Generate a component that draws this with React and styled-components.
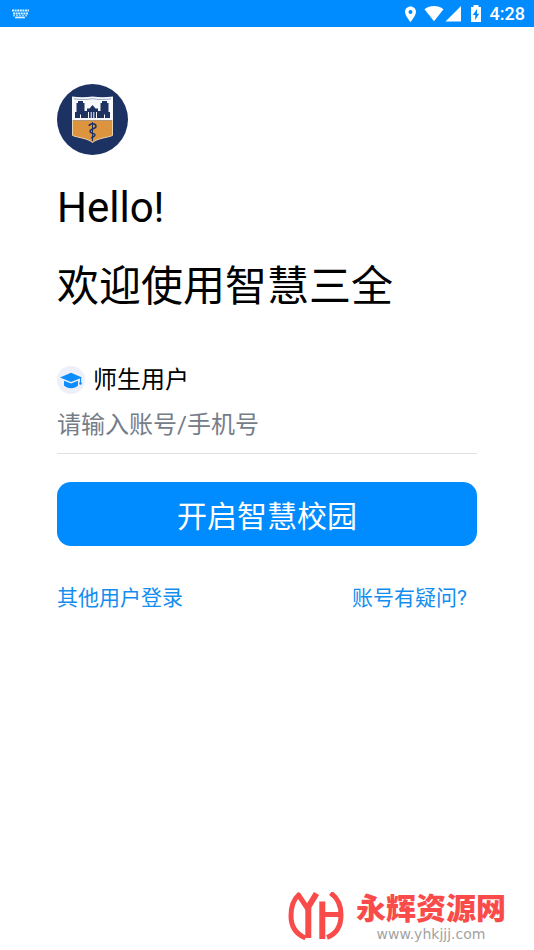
import React, {useState} from 'react';
import styled, {createGlobalStyle} from 'styled-components';


const GlobalStyle = createGlobalStyle`
    * {
        box-sizing: border-box;
    }
    body {
        margin: 0;
        background: #ffffff;
        color: #000000;
        font-family: Roboto, "Noto Sans CJK SC", sans-serif;
    }
`;

const Page = styled.div`
    display: flex;
    flex-direction: column;
    min-height: 100vh;
`;

const StatusBar = styled.header`
    display: flex;
    align-items: center;
    justify-content: space-between;
    height: 27px;
    padding: 0 9px 0 12px;
    background: #008cff;
    color: #ffffff;
`;

const StatusIcons = styled.div`
    display: flex;
    align-items: center;
`;

const Clock = styled.time`
    margin-left: 8px;
    font-size: 18px;
    line-height: 27px;
    font-weight: 500;
`;

const Content = styled.main`
    flex: 1;
    padding: 57px 57px 0;
`;

const Logo = styled.svg`
    display: block;
    width: 71px;
    height: 71px;
`;

const Title = styled.h1`
    margin: 13px 0 0;
    font-size: 42px;
    line-height: 79px;
    font-weight: 400;
`;

const UserType = styled.label`
    display: flex;
    align-items: center;
    gap: 8px;
    margin-top: 36px;
    font-size: 24px;
    line-height: 36px;
`;

const AccountInput = styled.input`
    display: block;
    width: 100%;
    height: 56px;
    padding: 0 0 2px;
    border: 0;
    border-bottom: 1px solid #e0e0e0;
    outline: none;
    background: transparent;
    font: inherit;
    font-size: 24px;

    &::placeholder {
        color: #757d88;
        opacity: 1;
    }
`;

const SubmitButton = styled.button`
    display: block;
    width: 100%;
    height: 64px;
    margin-top: 28px;
    padding: 0;
    border: 0;
    border-radius: 14px;
    background: #008cff;
    color: #ffffff;
    font: inherit;
    font-size: 30px;
    cursor: pointer;
`;

const LinkRow = styled.nav`
    display: flex;
    justify-content: space-between;
    margin-top: 36px;
    padding-right: 10px;
`;

const TextLink = styled.a`
    color: #148df0;
    font-size: 21px;
    line-height: 32px;
    text-decoration: none;
`;

const SiteMark = styled.footer`
    display: flex;
    align-items: flex-end;
    justify-content: flex-end;
    gap: 12px;
    padding: 0 28px 8px 0;
`;

const SiteText = styled.div`
    display: flex;
    flex-direction: column;
    align-items: center;
`;

const SiteName = styled.strong`
    color: #fa4b4b;
    font-family: "Liberation Sans", "Noto Sans CJK SC", sans-serif;
    font-size: 30px;
    line-height: 34px;
    font-weight: 900;
`;

const SiteUrl = styled.span`
    color: #a2a2a2;
    font-family: "DejaVu Sans", sans-serif;
    font-size: 14px;
    line-height: 16px;
`;


const KeyboardIcon = () => (
    <svg width="17" height="10" viewBox="0 0 17 10" fill="none" stroke="#d5f2ff" aria-hidden="true">
        <path d="M0 1.5H17M1 4.5H16" strokeWidth="2" strokeDasharray="2 .6"/>
        <path d="M1 6.8H16" strokeWidth="1" strokeDasharray="2 1"/>
        <path d="M3 8.5H13" strokeWidth="1.6"/>
    </svg>
);

const SignalIcons = () => (
    <svg width="78" height="18" viewBox="0 0 78 18" fill="#ffffff" aria-hidden="true">
        {/* location */}
        <path fillRule="evenodd" d="M6.5 1.5C3.4 1.5 1 3.8 1 6.8C1 10.8 6.5 17 6.5 17S12 10.8 12 6.8C12 3.8 9.6 1.5 6.5 1.5ZM6.5 4.9A2 2 0 1 1 6.5 8.9A2 2 0 1 1 6.5 4.9Z"/>
        {/* wifi */}
        <path d="M20.5 4.3C26-.1 34-.1 39.5 4.3L30 16.2Z"/>
        {/* signal */}
        <path d="M57 1V16.5H41.5Z"/>
        {/* battery */}
        <path fillRule="evenodd" d="M69.5 0H74.5V2H77V17H67V2H69.5ZM73 4L68.8 10H71.2V15L75.2 8.8H73Z"/>
    </svg>
);

const SchoolLogo = () => (
    <Logo viewBox="0 0 71 71" role="img" aria-label="智慧三全">
        <circle cx="35.5" cy="35.5" r="35.5" fill="#1c3263"/>
        <path d="M15 12.5C22 13.6 29 13.6 35.5 12.5C42 13.6 49 13.6 56 12.5V36.5H15Z" fill="#f6f8fc"/>
        <path d="M15.5 36.5H55.5V51.5C49 54 41 54 35.5 58.5C30 54 22 54 15.5 51.5Z" fill="#dc943e"/>
        <path d="M15.5 36V51.5C22 54 30 54 35.5 58.5C41 54 49 54 55.5 51.5V36" fill="none" stroke="#e9d2b2" strokeWidth="1"/>
        {/* towers and main hall */}
        <path fill="#1c3263" d="M18 34V28H19.5V19H21V17H26V19H27.5V27H30V24.5H32.5L35.5 21L38.5 24.5H41V27H43.5V19H45V17H50V19H51.5V28H53V34Z"/>
        <path d="M31.5 34V28M34.2 34V28M36.8 34V28M39.5 34V28M23.5 34V30.5M47.5 34V30.5" stroke="#f6f8fc" strokeWidth="1"/>
        <path d="M17 14.8C23 15.8 30 15.8 35.5 14.6C41 15.8 48 15.8 54 14.8" fill="none" stroke="#1c3263" strokeWidth=".4"/>
        {/* serpent on a staff */}
        <path d="M35.5 38V57" stroke="#1c3263" strokeWidth="1"/>
        <path d="M32 42C33 39 38.5 39 39 42C39.5 45 33 44.5 33 47.5C33 50 38 48.5 38 51C38 53 34.5 52.5 34.5 54.5" fill="none" stroke="#1c3263" strokeWidth="1.5"/>
    </Logo>
);

const CapIcon = () => (
    <svg width="28" height="28" viewBox="0 0 28 28" aria-hidden="true">
        <circle cx="14" cy="14" r="14" fill="#edf0f9"/>
        <path d="M3 11.5L14 6.8L25 11.5L14 16Z" fill="#0b8cff"/>
        <path d="M7 14.8L14 17.6L21 14.8V19.6C18 23 10 23 7 19.6Z" fill="#0b8cff"/>
        <path d="M23.5 12V17" stroke="#0b8cff" strokeWidth="1.2"/>
        <circle cx="23.5" cy="17.5" r="1.3" fill="#0b8cff"/>
    </svg>
);

const SiteLogo = () => (
    <svg width="56" height="50" viewBox="0 0 56 50" fill="none" stroke="#fa4b4b" strokeWidth="5" strokeLinejoin="round" aria-hidden="true">
        <path d="M17.5 46C8 42 3 34 3 24C3 14 6 7 10.5 3L20.5 18"/>
        <path d="M28.5 1.5L20.3 15V46" strokeWidth="6"/>
        <path d="M34.3 47V9.5" strokeWidth="6"/>
        <path d="M34 22.5H52"/>
        <path d="M42.5 1C50 6 53 14 53 23C53 34 48 42 39 45.5"/>
    </svg>
);


const App = () => {

    const [account,setAccount] = useState("");

    return (
        <>
            <GlobalStyle/>
            <Page>
                <StatusBar>
                    <KeyboardIcon/>
                    <StatusIcons>
                        <SignalIcons/>
                        <Clock>4:28</Clock>
                    </StatusIcons>
                </StatusBar>

                <Content>
                    <SchoolLogo/>
                    <Title>
                        Hello!<br/>
                        欢迎使用智慧三全
                    </Title>

                    {/* Login */}
                    <form onSubmit={(e) => e.preventDefault()}>
                        <UserType htmlFor="account">
                            <CapIcon/>
                            师生用户
                        </UserType>
                        <AccountInput
                            id="account"
                            type="text"
                            placeholder="请输入账号/手机号"
                            value={account}
                            onChange={(e) => setAccount(e.target.value)}
                        />
                        <SubmitButton type="submit">开启智慧校园</SubmitButton>
                    </form>

                    <LinkRow>
                        <TextLink href="#other">其他用户登录</TextLink>
                        <TextLink href="#help">账号有疑问?</TextLink>
                    </LinkRow>
                </Content>

                <SiteMark>
                    <SiteLogo/>
                    <SiteText>
                        <SiteName>永辉资源网</SiteName>
                        <SiteUrl>www.yhkjjj.com</SiteUrl>
                    </SiteText>
                </SiteMark>
            </Page>
        </>
    );
};

export default App;
